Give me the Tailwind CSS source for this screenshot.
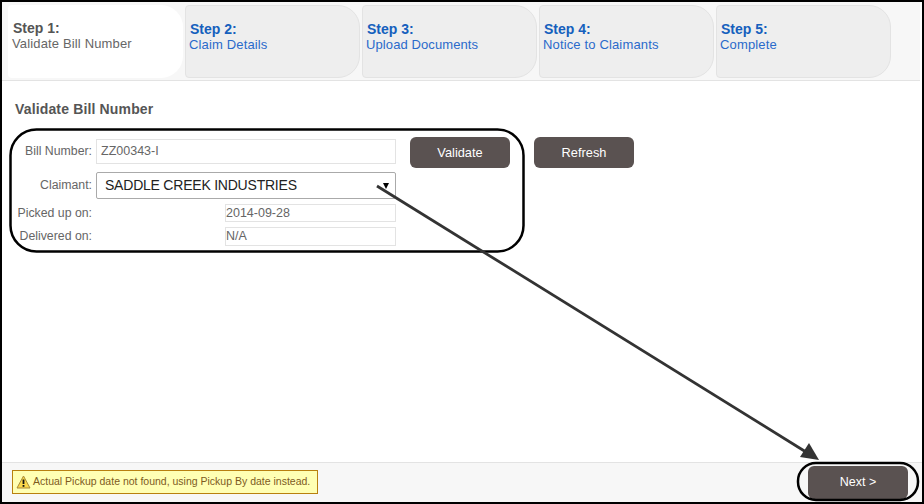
<!DOCTYPE html>
<html lang="en">
<head>
  <meta charset="UTF-8" />
  <title>Validate Bill Number</title>
  <script src="https://cdn.jsdelivr.net/npm/@tailwindcss/browser@4"></script>
</head>
<body class="bg-white">
  <div class="relative w-[924px] h-[504px] flex flex-col overflow-hidden bg-white border-t-2 border-l-2 border-r-2 border-b-2 border-black font-['Liberation_Sans',Arial,sans-serif] text-[#555555]">

    <!-- STEPS -->
    <div class="h-[79px] shrink-0 mr-[2px] pt-[3px] pl-[6px] flex gap-[2px] bg-[#f7f7f7] border-b border-[#e3e3e3]">
      <div class="w-[175px] h-[73px] pl-[4px] pt-[14px] rounded-tl-[4px] rounded-bl-[4px] rounded-r-[22px] bg-white">
        <div class="text-[14px] leading-[18px] font-bold pl-[1px]">Step 1:</div>
        <div class="text-[13px] leading-[14px] tracking-[0.15px] text-[#666666]">Validate Bill Number</div>
      </div>
      <div class="w-[175px] h-[73px] pl-[3px] pt-[14px] rounded-tl-[4px] rounded-bl-[4px] rounded-r-[22px] bg-[#eeeeee] border border-[#e3e3e3] text-[#2a6acb]">
        <div class="text-[14px] leading-[18px] font-bold pl-[1px] text-[#1560bd]">Step 2:</div>
        <div class="text-[13px] leading-[14px] tracking-[0.15px]">Claim Details</div>
      </div>
      <div class="w-[175px] h-[73px] pl-[3px] pt-[14px] rounded-tl-[4px] rounded-bl-[4px] rounded-r-[22px] bg-[#eeeeee] border border-[#e3e3e3] text-[#2a6acb]">
        <div class="text-[14px] leading-[18px] font-bold pl-[1px] text-[#1560bd]">Step 3:</div>
        <div class="text-[13px] leading-[14px] tracking-[0.1px]">Upload Documents</div>
      </div>
      <div class="w-[175px] h-[73px] pl-[3px] pt-[14px] rounded-tl-[4px] rounded-bl-[4px] rounded-r-[22px] bg-[#eeeeee] border border-[#e3e3e3] text-[#2a6acb]">
        <div class="text-[14px] leading-[18px] font-bold pl-[1px] text-[#1560bd]">Step 4:</div>
        <div class="text-[13px] leading-[14px] tracking-[0.15px]">Notice to Claimants</div>
      </div>
      <div class="w-[175px] h-[73px] pl-[3px] pt-[14px] rounded-tl-[4px] rounded-bl-[4px] rounded-r-[22px] bg-[#eeeeee] border border-[#e3e3e3] text-[#2a6acb]">
        <div class="text-[14px] leading-[18px] font-bold pl-[1px] text-[#1560bd]">Step 5:</div>
        <div class="text-[13px] leading-[14px] tracking-[0.15px]">Complete</div>
      </div>
    </div>

    <!-- FORM -->
    <div class="flex-1 pl-[13px] pt-[19px]">
      <h2 class="text-[14px] leading-[18px] font-bold tracking-[0.15px]">Validate Bill Number</h2>
      <div class="flex mt-[19px]">
        <div class="w-[395px] pl-[3px] pt-[2px] text-[12.3px] text-[#666666]">
          <div class="flex items-center h-[24px]">
            <label class="w-[78px] shrink-0 flex justify-end whitespace-nowrap pr-[4px]">Bill Number:</label>
            <div class="w-[300px] h-[25px] pl-[4px] flex items-center border border-[#e3e3e3] text-[12.5px]">ZZ00343-I</div>
          </div>
          <div class="flex items-center h-[27px] mt-[9px]">
            <label class="w-[78px] shrink-0 flex justify-end whitespace-nowrap pr-[4px]">Claimant:</label>
            <div class="w-[300px] h-[27px] pl-[8px] pr-[6px] flex items-center justify-between border border-[#aaaaaa] rounded-[2px] text-[14px] tracking-[-0.22px] text-[#222222]">
              <span>SADDLE CREEK INDUSTRIES</span>
              <span class="w-0 h-0 border-x-[3px] border-x-transparent border-t-[6px] border-t-black"></span>
            </div>
          </div>
          <div class="flex items-center h-[18px] mt-[5px]">
            <label class="w-[78px] shrink-0 flex justify-end whitespace-nowrap pr-[4px]">Picked up on:</label>
            <div class="w-[129px] shrink-0"></div>
            <div class="w-[171px] h-[18px] flex items-center border border-[#e3e3e3] text-[12.5px]">2014-09-28</div>
          </div>
          <div class="flex items-center h-[18px] mt-[5px]">
            <label class="w-[78px] shrink-0 flex justify-end whitespace-nowrap pr-[4px]">Delivered on:</label>
            <div class="w-[129px] shrink-0"></div>
            <div class="w-[171px] h-[19px] flex items-center border border-[#e3e3e3] text-[12.5px]">N/A</div>
          </div>
        </div>
        <div class="flex gap-[24px] items-start">
          <button class="w-[100px] h-[31px] rounded-[6px] bg-[#5a5251] text-white text-[12.8px]">Validate</button>
          <button class="w-[100px] h-[31px] rounded-[6px] bg-[#5a5251] text-white text-[12.8px]">Refresh</button>
        </div>
      </div>
    </div>

    <!-- FOOTER -->
    <div class="h-[40px] shrink-0 pl-[10px] pr-[14px] pt-[3px] flex justify-between items-start bg-[#f7f7f7] border-t border-[#e3e3e3]">
      <div class="w-[306px] h-[24px] mt-[4px] pl-[3px] flex items-center gap-[2px] bg-[#ffffb3] border border-[#b8800f] text-[10.5px] text-[#7d5a1e] whitespace-nowrap">
        <svg class="shrink-0" width="15" height="14" viewBox="0 0 15 14">
          <path d="M7.5 1 L14 13 L1 13 Z" fill="#fbd84a" stroke="#a98a3a" stroke-width="1" stroke-linejoin="round" />
          <path d="M7.5 4.5 V9" stroke="#111111" stroke-width="1.8" />
          <path d="M7.5 10 V11.8" stroke="#111111" stroke-width="1.8" />
        </svg>
        <span>Actual Pickup date not found, using Pickup By date instead.</span>
      </div>
      <button class="w-[100px] h-[33px] rounded-[6px] bg-[#5a5251] text-white text-[12.5px]">Next &gt;</button>
    </div>

    <!-- ANNOTATIONS -->
    <svg class="absolute left-[-2px] top-[-2px] pointer-events-none" width="924" height="504" viewBox="0 0 924 504">
      <rect x="10.5" y="129.5" width="513" height="122" rx="26" fill="none" stroke="#000000" stroke-width="2.5" />
      <rect x="798" y="463" width="120" height="37" rx="18" fill="none" stroke="#000000" stroke-width="2.5" />
      <path d="M377 186 L806 452" stroke="#333333" stroke-width="2.8" />
      <path d="M819 460 L800 457 L809 443 Z" fill="#333333" />
    </svg>
  </div>
</body>
</html>
